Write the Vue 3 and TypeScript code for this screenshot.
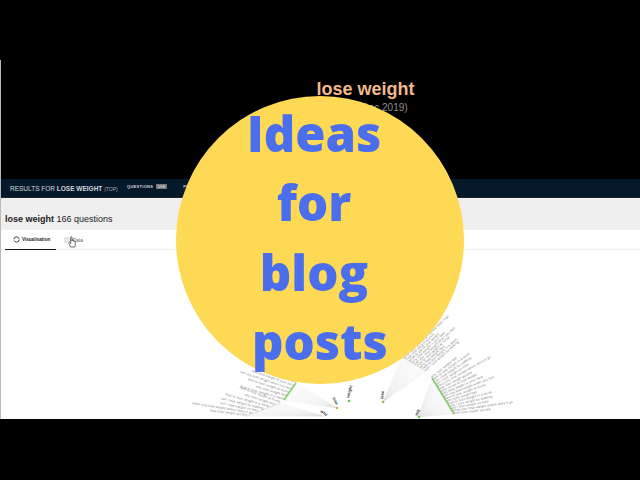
<script setup lang="ts">
interface Fan { n: [number, number]; a: [number, number]; b: [number, number]; a0: number; a1: number; count: number; left?: boolean; green?: boolean }

const phrases = [
  'why lose weight fast', 'how to lose weight in a week', 'can i lose weight by walking',
  'will i lose weight on keto', 'when you lose weight where does it go', 'how lose weight quickly',
  'what to eat to lose weight', 'why lose weight in your face', 'can you lose weight when you fast',
  'how to lose weight at home',
]

const fans: Fan[] = [
  { n: [417, 417], a: [431, 378], b: [453, 414], a0: -38, a1: -6, count: 16, green: true },
  { n: [382, 402], a: [401, 357], b: [425, 371], a0: -44, a1: -41, count: 10 },
  { n: [336, 408], a: [295, 383], b: [283, 400], a0: 200, a1: 196, count: 6, left: true, green: true },
  { n: [322, 416], a: [279, 403], b: [246, 416], a0: 200, a1: 187, count: 7, left: true },
]

function lerp(a: number, b: number, t: number) { return a + (b - a) * t }

const lines = fans.flatMap((f, i) =>
  Array.from({ length: f.count * 2 - 1 }, (_, k) => {
    const t = k / (f.count * 2 - 2)
    return { id: `${i}-${k}`, x1: f.n[0], y1: f.n[1], x2: lerp(f.a[0], f.b[0], t), y2: lerp(f.a[1], f.b[1], t) }
  }),
)

const labels = fans.flatMap((f, i) =>
  Array.from({ length: f.count }, (_, k) => {
    const t = k / (f.count - 1)
    const x = lerp(f.a[0], f.b[0], t)
    const y = lerp(f.a[1], f.b[1], t)
    const ang = lerp(f.a0, f.a1, t) - (f.left ? 180 : 0)
    return {
      id: `${i}-${k}`,
      text: phrases[(k + i * 3) % phrases.length],
      x, y,
      anchor: f.left ? 'end' : 'start',
      transform: `rotate(${ang} ${x} ${y})`,
    }
  }),
)

const arcs = fans.map((f, i) => ({ id: i, x1: f.a[0], y1: f.a[1], x2: f.b[0], y2: f.b[1], green: !!f.green }))

const nodes = [
  { x: 348, y: 401, c: '#6cc24a', label: 'weight', rot: -75, anchor: 'start', dx: 0, dy: -3 },
  { x: 382, y: 402, c: '#8cc152', label: 'lose', rot: -82, anchor: 'start', dx: 0, dy: -3 },
  { x: 336, y: 408, c: '#c9b458', label: 'how', rot: 62, anchor: 'end', dx: -1, dy: -3 },
  { x: 418, y: 417, c: '#6cc24a', label: 'will', rot: -60, anchor: 'start', dx: -2, dy: -1 },
]
</script>

<template>
  <div class="frame">
    <div class="band"></div>
    <div class="screen">
      <header class="hero">
        <h1>lose weight</h1>
        <p>(from Dec 2019)</p>
      </header>
      <nav class="nav">
        <span class="results">RESULTS FOR <b>LOSE WEIGHT</b> <small>(TOP)</small></span>
        <span class="link">QUESTIONS <i>109</i></span>
        <span class="link">PREPOSITIONS</span>
      </nav>
      <section class="summary"><b>lose weight</b> 166 questions</section>
      <div class="tabs">
        <div class="tab active">
          <svg width="7" height="7" viewBox="0 0 8 8"><circle cx="4" cy="4" r="3" fill="none" stroke="#333" stroke-width="1.1" stroke-dasharray="8 1.5" /></svg>
          Visualisation
        </div>
        <div class="tab">
          <svg width="7" height="6" viewBox="0 0 7 6"><path d="M0 1h7M0 3h7M0 5h7" stroke="#999" stroke-width=".5" /></svg>
          Data
          <svg class="hand" width="9" height="12" viewBox="0 0 9 12">
            <path d="M2.6 11 .8 7.2c-.3-.7.5-1.2 1-.6l.9 1V1.400c0-.9 1.300-.9 1.300 0V5l.1-.8c0-.8 1.200-.8 1.200 0V5.200c0-.7 1.100-.7 1.100.1v.6c0-.6 1-.6 1 .1v2.300L6.900 11z" fill="#fff" stroke="#333" stroke-width=".7" />
          </svg>
        </div>
      </div>
      <svg class="tree" viewBox="0 250 640 169" width="640" height="169">
        <line v-for="l in lines" :key="l.id" :x1="l.x1" :y1="l.y1" :x2="l.x2" :y2="l.y2" stroke="#dcdedc" stroke-width=".3" />
        <line
          v-for="a in arcs" :key="a.id" :x1="a.x1" :y1="a.y1" :x2="a.x2" :y2="a.y2"
          :stroke="a.green ? '#8bd267' : '#d5e6cc'" :stroke-width="a.green ? 1.6 : 1"
        />
        <text
          v-for="t in labels" :key="t.id" :x="t.x" :y="t.y" :text-anchor="t.anchor"
          :transform="t.transform" class="leaf"
        >{{ t.text }}</text>
        <g v-for="n in nodes" :key="n.label">
          <circle :cx="n.x" :cy="n.y" r="1.300" :fill="n.c" />
          <text
            :x="n.x + n.dx" :y="n.y + n.dy" :text-anchor="n.anchor"
            :transform="`rotate(${n.rot} ${n.x + n.dx} ${n.y + n.dy})`" class="branch"
          >{{ n.label }}</text>
        </g>
        <text x="319" y="412" transform="rotate(32 319 412)" class="branch">why</text>
      </svg>
    </div>
    <div class="band"></div>
    <div class="badge">
      <span>Ideas</span>
      <span>for</span>
      <span>blog</span>
      <span class="posts">posts</span>
    </div>
  </div>
</template>

<style scoped>
.frame { position: relative; width: 640px; height: 480px; background: #000; overflow: hidden; display: flex; flex-direction: column; font-family: "Liberation Sans", Arial, sans-serif; }
.band { height: 60px; flex: none; background: #000; }
.band:nth-of-type(3) { height: 61px; }
.screen { height: 359px; flex: none; display: flex; flex-direction: column; background: #fff; border-left: 1px solid #b8b8b8; box-sizing: border-box; }
.hero { height: 119px; flex: none; background: #000; padding-top: 19px; padding-left: 90px; text-align: center; box-sizing: border-box; }
.hero h1 { margin: 0; font-size: 18px; line-height: 20px; font-weight: 700; color: #f3b98c; }
.hero p { margin: 1px 0 0; font-size: 10px; line-height: 16px; color: #8d8d8d; padding-left: 12px; }
.nav { height: 19px; flex: none; background: #05192a; border-bottom: 1px solid #222; box-sizing: border-box; display: flex; align-items: center; color: #d0d5d9; padding-left: 9px; font-size: 6.5px; }
.results { width: 117px; white-space: nowrap; }
.results small { font-size: 5px; color: #aab; }
.link { font-size: 4px; font-weight: 700; letter-spacing: .3px; margin-right: 16px; white-space: nowrap; position: relative; top: -2px; }
.link i { background: #777; font-style: normal; padding: 0 2px; margin-left: 1px; }
.summary { height: 32px; flex: none; background: #efefef; padding: 15px 0 0 4px; box-sizing: border-box; font-size: 9px; line-height: 12px; color: #222; }
.tabs { height: 20px; flex: none; display: flex; background: #fff; border-bottom: 1px solid #f2f2f2; box-sizing: border-box; padding-left: 4px; }
.tab { position: relative; display: flex; align-items: center; gap: 2px; font-size: 4.600px; color: #555; padding: 0 8px; height: 20px; box-sizing: border-box; white-space: nowrap; }
.tab svg { flex: none; }
.tab.active { width: 51px; border-bottom: 1px solid #111; color: #222; font-weight: 700; }
.hand { position: absolute; left: 12px; top: 6px; }
.tree { display: block; flex: none; }
.leaf { font-size: 3.300px; letter-spacing: .12px; fill: #808080; font-family: "Liberation Sans", Arial, sans-serif; }
.branch { font-size: 4px; font-weight: 700; fill: #333; font-family: "Liberation Sans", Arial, sans-serif; }
.badge { position: absolute; left: 176px; top: 96px; width: 288px; height: 288px; border-radius: 50%; background: #fed955; display: flex; flex-direction: column; align-items: center; box-sizing: border-box; font-family: "Open Sans", sans-serif; font-weight: 800; font-size: 49px; line-height: 69.400px; color: #4b6fec; padding-right: 12px; }
.badge span:first-child { margin-top: 3px; }
.posts { margin-left: 12px; }
</style>
